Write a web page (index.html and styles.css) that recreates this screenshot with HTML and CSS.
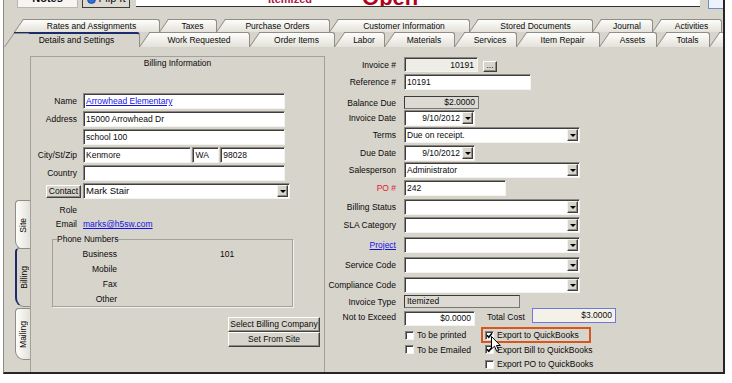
FILE: index.html
```html
<!DOCTYPE html>
<html lang="en">
<head>
    <meta charset="UTF-8">
    <meta name="viewport" content="width=device-width, initial-scale=1.0">
    <title>Invoice - Details and Settings</title>
    <link rel="stylesheet" href="styles.css">
</head>
<body>

<div class="window">
    <div class="toolbar">
        <div class="tool-btn notes"><span>Notes</span></div>
        <div class="tool-btn flip">
            <svg width="9" height="9" viewBox="0 0 9 9"><circle cx="4.5" cy="4.5" r="4" fill="#2f6fd6" stroke="#1a3f8a" stroke-width="0.8"/></svg>
            <span>Flip It</span>
        </div>
        <div class="status-strip">
            <span class="status-type">Itemized</span>
            <span class="status-open">Open</span>
        </div>
        <div class="corner-btn"></div>
    </div>

    <div class="tabs">
        <div class="tab-row back">
            <div class="tab">Rates and Assignments</div>
            <div class="tab">Taxes</div>
            <div class="tab">Purchase Orders</div>
            <div class="tab">Customer Information</div>
            <div class="tab">Stored Documents</div>
            <div class="tab">Journal</div>
            <div class="tab">Activities</div>
        </div>
        <div class="tab-row front">
            <div class="tab active">Details and Settings</div>
            <div class="tab">Work Requested</div>
            <div class="tab">Order Items</div>
            <div class="tab">Labor</div>
            <div class="tab">Materials</div>
            <div class="tab">Services</div>
            <div class="tab">Item Repair</div>
            <div class="tab">Assets</div>
            <div class="tab">Totals</div>
            <div class="tab"></div>
        </div>
    </div>

    <div class="panel">
        <div class="side-tabs">
            <div class="side-tab"><span>Site</span></div>
            <div class="side-tab active"><span>Billing</span></div>
            <div class="side-tab mailing"><span>Mailing</span></div>
        </div>

        <div class="billing">
            <div class="group-title">Billing Information</div>

            <div class="addr">
                <div class="lbl">Name</div>
                <div class="field"><span class="link">Arrowhead Elementary</span></div>
                <div class="lbl">Address</div>
                <div class="field">15000 Arrowhead Dr</div>
                <div class="lbl"></div>
                <div class="field">school 100</div>
                <div class="lbl">City/St/Zip</div>
                <div class="split">
                    <div class="field city">Kenmore</div>
                    <div class="field state">WA</div>
                    <div class="field zip">98028</div>
                </div>
                <div class="lbl">Country</div>
                <div class="field"></div>
                <div class="btn contact-btn">Contact</div>
                <div class="combo contact-combo">
                    <div class="val big">Mark Stair</div>
                    <div class="arrow"></div>
                </div>
            </div>

            <div class="contact-info">
                <div class="lbl">Role</div>
                <div></div>
                <div class="lbl">Email</div>
                <div><span class="link">marks@h5sw.com</span></div>
            </div>

            <fieldset class="phones">
                <legend>Phone Numbers</legend>
                <div class="phone-grid">
                    <div class="lbl">Business</div>
                    <div>101</div>
                    <div class="lbl">Mobile</div>
                    <div></div>
                    <div class="lbl">Fax</div>
                    <div></div>
                    <div class="lbl">Other</div>
                    <div></div>
                </div>
            </fieldset>

            <div class="billing-actions">
                <div class="btn">Select Billing Company</div>
                <div class="btn">Set From Site</div>
            </div>
        </div>

        <div class="invoice">
            <div class="row h15">
                <div class="lbl">Invoice #</div>
                <div class="field readonly right w-invoice">10191</div>
                <div class="btn dots">...</div>
            </div>
            <div class="row gap2">
                <div class="lbl">Reference #</div>
                <div class="field w-ref">10191</div>
            </div>
            <div class="row gap6 short">
                <div class="lbl">Balance Due</div>
                <div class="field boxed right w-balance">$2.0000</div>
            </div>
            <div class="row gap1">
                <div class="lbl">Invoice Date</div>
                <div class="combo w-date">
                    <div class="val right">9/10/2012</div>
                    <div class="arrow"></div>
                </div>
            </div>
            <div class="row gap1">
                <div class="lbl">Terms</div>
                <div class="combo w-wide">
                    <div class="val">Due on receipt.</div>
                    <div class="arrow"></div>
                </div>
            </div>
            <div class="row gap2">
                <div class="lbl">Due Date</div>
                <div class="combo w-date">
                    <div class="val right">9/10/2012</div>
                    <div class="arrow"></div>
                </div>
            </div>
            <div class="row gap1">
                <div class="lbl">Salesperson</div>
                <div class="combo w-wide">
                    <div class="val">Administrator</div>
                    <div class="arrow"></div>
                </div>
            </div>
            <div class="row gap2">
                <div class="lbl red">PO #</div>
                <div class="field w-po">242</div>
            </div>
            <div class="row gap3">
                <div class="lbl">Billing Status</div>
                <div class="combo w-wide"><div class="val"></div><div class="arrow"></div></div>
            </div>
            <div class="row gap2">
                <div class="lbl">SLA Category</div>
                <div class="combo w-wide"><div class="val"></div><div class="arrow"></div></div>
            </div>
            <div class="row gap4">
                <div class="lbl"><span class="link">Project</span></div>
                <div class="combo w-wide"><div class="val"></div><div class="arrow"></div></div>
            </div>
            <div class="row gap4">
                <div class="lbl">Service Code</div>
                <div class="combo w-wide"><div class="val"></div><div class="arrow"></div></div>
            </div>
            <div class="row gap4">
                <div class="lbl">Compliance Code</div>
                <div class="combo w-wide"><div class="val"></div><div class="arrow"></div></div>
            </div>
            <div class="row gap2 short">
                <div class="lbl">Invoice Type</div>
                <div class="field boxed w-type">Itemized</div>
            </div>
            <div class="row totals">
                <div class="lbl">Not to Exceed</div>
                <div class="field right w-nte">$0.0000</div>
                <div class="total-lbl">Total Cost</div>
                <div class="field total right">$3.0000</div>
            </div>

            <div class="checks">
                <div class="cb"><span class="chk"></span>To be printed</div>
                <div class="cb focus"><span class="chk on"><svg viewBox="0 0 7 7"><path d="M1 3.2 L2.8 5.2 L6 1.2" /></svg></span>Export to QuickBooks</div>
                <div class="cb"><span class="chk"></span>To be Emailed</div>
                <div class="cb"><span class="chk on"><svg viewBox="0 0 7 7"><path d="M1 3.2 L2.8 5.2 L6 1.2" /></svg></span>Export Bill to QuickBooks</div>
                <div class="cb col2"><span class="chk"></span>Export PO to QuickBooks</div>
            </div>
        </div>
    </div>

    <svg class="cursor" width="11" height="17" viewBox="0 0 11 17">
        <path d="M0.5 0.5 L0.5 13 L3.5 10.2 L5.7 15.3 L7.6 14.4 L5.5 9.5 L9.3 9.5 Z" fill="#fff" stroke="#000" stroke-width="1"/>
    </svg>
</div>

</body>
</html>
```

FILE: styles.css
```css
* {
    box-sizing: border-box;
}
body {
    margin: 0;
    background: #fff;
    font-family: "Liberation Sans", Arial, sans-serif;
    font-size: 8.5px;
    color: #0a0a0a;
}
.window {
    position: relative;
    width: 722px;
    height: 374px;
    margin-left: 3px;
    background: #d7d4cc;
    border-left: 1px solid #8d8b84;
    border-right: 2px solid #262626;
    border-bottom: 2px solid #262626;
    overflow: hidden;
}

/* top strip, cut off by the screenshot */
.toolbar {
    display: flex;
    height: 8px;
}
.tool-btn {
    display: flex;
    justify-content: center;
    gap: 3px;
    height: 8px;
    overflow: hidden;
    border: 1px solid #7f7d76;
    border-top: none;
    font-size: 11px;
    line-height: 11px;
}
.tool-btn span {
    margin-top: -7px;
}
.tool-btn svg {
    margin-top: -5px;
}
.notes {
    margin-left: 13px;
    width: 61px;
    background: #f6f5f2;
    border-color: #b9b7b0;
    font-weight: bold;
}
.flip {
    margin-left: 4px;
    width: 48px;
    background: #dcd9d1;
    border-color: #3c3c3c;
}
.status-strip {
    display: flex;
    align-items: flex-start;
    margin-left: 6px;
    width: 564px;
    height: 7px;
    background: #fff;
    border-bottom: 1px solid #333;
    overflow: hidden;
    font-weight: bold;
}
.status-type {
    margin-left: 132px;
    margin-top: -6px;
    font-size: 11px;
    line-height: 11px;
    color: #b01442;
}
.status-open {
    margin-left: 50px;
    margin-top: -13px;
    font-size: 22px;
    line-height: 22px;
    color: #b3001a;
}
.corner-btn {
    margin-left: 8px;
    width: 15px;
    height: 9px;
    background: #eef3fb;
    border-left: 1px solid #6d8fc9;
    border-bottom: 1px solid #6d8fc9;
}

/* page tabs */
.tabs {
    margin-top: 11px;
}
.tab-row {
    display: grid;
}
.tab-row.back {
    height: 13px;
    padding-left: 11px;
    grid-template-columns: 145px 57px 113px 140px 123px 60px 69px;
}
.tab-row.front {
    height: 15px;
    padding-left: 1px;
    grid-template-columns: 135px 110px 85px 50px 70px 62px 83px 57px 53px 17px;
}
.tab {
    position: relative;
    z-index: 0;
    margin-left: 9px;
    border-top: 1px solid #8f8d86;
    border-right: 1px solid #8f8d86;
    border-top-right-radius: 3px;
    background: linear-gradient(#fdfdfb, #e3e1d9);
    text-align: center;
    white-space: nowrap;
}
.back .tab {
    line-height: 12px;
}
.front .tab {
    line-height: 14px;
}
.tab::before {
    content: "";
    position: absolute;
    z-index: -1;
    top: -1px;
    bottom: 0;
    left: -10px;
    width: 14px;
    background: linear-gradient(#fdfdfb, #e3e1d9);
    border-top: 1px solid #8f8d86;
    border-left: 1px solid #8f8d86;
    transform: skewX(-35deg);
    transform-origin: 0 100%;
}
.tab.active,
.tab.active::before {
    background: #d7d4cc;
}
.tab.active {
    border-top: 2px solid #1c2b6e;
    line-height: 13px;
}

/* body */
.panel {
    display: flex;
    height: 325px;
}
.side-tabs {
    display: flex;
    flex-direction: column;
    margin-left: 11px;
    margin-top: 153px;
    width: 15px;
}
.side-tab {
    position: relative;
    display: flex;
    align-items: center;
    justify-content: center;
    width: 15px;
    height: 50px;
    border: 1px solid #8f8d86;
    border-right: none;
    border-radius: 4px 0 0 9px;
    background: linear-gradient(90deg, #fdfdfb, #e3e1d9);
}
.side-tab span {
    writing-mode: vertical-rl;
    transform: rotate(180deg);
}
.side-tab.active {
    z-index: 1;
    height: 59px;
    margin-top: -2px;
    border-left: 2px solid #1c2b6e;
    background: #d7d4cc;
}
.side-tab.mailing {
    height: 52px;
    margin-top: 1px;
}

.billing {
    display: flex;
    flex-direction: column;
    width: 295px;
    margin-top: 9px;
    border: 1px solid #a3a19a;
    border-bottom: none;
}
.group-title {
    margin-top: 1px;
    line-height: 10px;
    text-align: center;
}
.lbl {
    text-align: right;
    white-space: nowrap;
}
.red {
    color: #e3202a;
}
.link {
    color: #1212e6;
    text-decoration: underline;
}
.addr {
    display: grid;
    grid-template-columns: 46px 202px;
    grid-auto-rows: 16px;
    column-gap: 6px;
    row-gap: 2px;
    align-items: center;
    margin-top: 25px;
}
.field {
    height: 16px;
    padding-left: 2px;
    background: #fff;
    border: 1px solid;
    border-color: #8a8880 #f4f3ef #f4f3ef #8a8880;
    box-shadow: inset 1px 1px 0 #3d3d3d;
    line-height: 14px;
    white-space: nowrap;
    overflow: hidden;
}
.field.right {
    padding-left: 0;
    padding-right: 3px;
    text-align: right;
}
.split {
    display: flex;
    gap: 1px;
}
.field.city {
    width: 109px;
}
.field.state {
    width: 27px;
}
.field.zip {
    width: 65px;
}
.btn {
    background: #d7d4cc;
    border: 1px solid;
    border-color: #fff #404040 #404040 #fff;
    box-shadow: inset -1px -1px 0 #8d8b84;
    text-align: center;
    white-space: nowrap;
}
.contact-btn {
    justify-self: end;
    width: 35px;
    height: 13px;
    margin-right: -4px;
    line-height: 11px;
}
.combo {
    display: flex;
    height: 16px;
    background: #fff;
    border: 1px solid;
    border-color: #8a8880 #f4f3ef #f4f3ef #8a8880;
    box-shadow: inset 1px 1px 0 #3d3d3d;
}
.combo .val {
    flex: 1;
    padding-left: 2px;
    line-height: 14px;
    white-space: nowrap;
    overflow: hidden;
}
.combo .val.right {
    padding-right: 2px;
    text-align: right;
}
.combo .val.big {
    font-size: 9.5px;
}
.arrow {
    display: flex;
    align-items: center;
    justify-content: center;
    width: 11px;
    margin: 1px 1px 1px 0;
    background: #d7d4cc;
    border: 1px solid;
    border-color: #f4f3ef #404040 #404040 #f4f3ef;
    box-shadow: inset -1px -1px 0 #8d8b84;
}
.arrow::after {
    content: "";
    border-left: 3px solid transparent;
    border-right: 3px solid transparent;
    border-top: 3px solid #000;
}
.contact-combo {
    width: 207px;
}
.contact-info {
    display: grid;
    grid-template-columns: 46px auto;
    grid-auto-rows: 14px;
    column-gap: 6px;
    align-items: center;
    margin-top: 4px;
}
.phones {
    width: 241px;
    height: 73px;
    margin: 3px 0 0 21px;
    padding: 0;
    border: 1px solid #a3a19a;
    box-shadow: 1px 1px 0 #f2f1ed;
}
.phones legend {
    margin-left: 4px;
    padding: 0;
    line-height: 10px;
}
.phone-grid {
    display: grid;
    grid-template-columns: 64px auto;
    grid-auto-rows: 15px;
    column-gap: 103px;
    align-items: center;
    margin-top: 2px;
}
.billing-actions {
    display: flex;
    flex-direction: column;
    align-items: flex-end;
    margin: 10px 4px 0 0;
}
.billing-actions .btn {
    width: 92px;
    height: 15px;
    line-height: 13px;
}

/* invoice details */
.invoice {
    display: flex;
    flex-direction: column;
    margin-left: 1px;
    padding-top: 10px;
}
.row {
    display: flex;
    align-items: center;
    height: 16px;
}
.row .lbl {
    width: 70px;
    margin-right: 8px;
}
.row.h15,
.row.h15 .field {
    height: 15px;
}
.row.short {
    height: 13px;
}
.row.short .field {
    height: 13px;
    line-height: 11px;
}
.gap1 { margin-top: 1px; }
.gap2 { margin-top: 2px; }
.gap3 { margin-top: 3px; }
.gap4 { margin-top: 4px; }
.gap6 { margin-top: 6px; }

.field.readonly {
    background: #eeede7;
}
.field.boxed {
    background: #dcdad3;
    border-color: #3a3a3a #777 #777 #3a3a3a;
    box-shadow: none;
}
.w-invoice { width: 74px; }
.w-ref { width: 127px; }
.w-balance { width: 75px; }
.w-date { width: 71px; }
.w-wide { width: 176px; }
.w-po { width: 102px; }
.w-type { width: 116px; }
.w-nte { width: 71px; }
.dots {
    align-self: flex-end;
    width: 14px;
    height: 11px;
    margin-left: 5px;
    line-height: 6px;
}
.row.totals {
    align-items: flex-start;
    height: 18px;
}
.row.totals .lbl {
    margin-top: 4px;
}
.row.totals .w-nte {
    margin-top: 3px;
    height: 15px;
    line-height: 13px;
}
.total-lbl {
    width: 45px;
    margin: 4px 0 0 12px;
}
.field.total {
    width: 84px;
    height: 15px;
    line-height: 13px;
    background: #f4f2e8;
    border: 1px solid #6f78e0;
    box-shadow: none;
}
.checks {
    display: grid;
    grid-template-columns: 80px auto;
    grid-template-rows: 14px 15px 14px;
    align-items: center;
    margin: 2px 0 0 78px;
}
.cb {
    display: flex;
    align-items: center;
    gap: 3px;
    justify-self: start;
    padding-left: 1px;
    white-space: nowrap;
}
.cb.col2 {
    grid-column: 2;
}
.cb.focus {
    outline: 2px solid #d5571d;
    outline-offset: 1px;
    padding-right: 9px;
}
.chk {
    display: flex;
    width: 9px;
    height: 9px;
    background: #fff;
    border: 1px solid;
    border-color: #808080 #f4f3ef #f4f3ef #808080;
    box-shadow: inset 1px 1px 0 #404040;
}
.chk svg {
    width: 7px;
    height: 7px;
}
.chk path {
    fill: none;
    stroke: #000;
    stroke-width: 1.6;
}

.cursor {
    position: absolute;
    left: 487px;
    top: 336px;
}
```
